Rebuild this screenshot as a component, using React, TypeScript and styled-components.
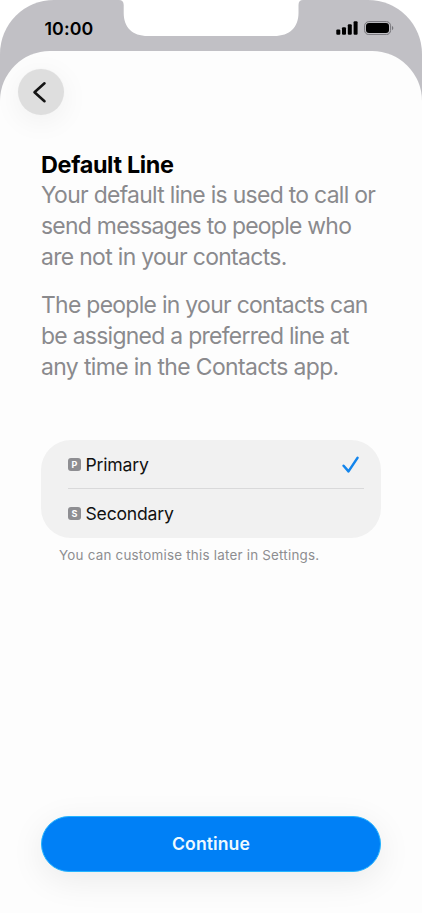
import React from "react";
import styled, { createGlobalStyle } from "styled-components";

const GlobalStyle = createGlobalStyle`
  *, *::before, *::after { box-sizing: border-box; }
  body { margin: 0; background: #fff; font-family: Inter, "Liberation Sans", sans-serif; }
  h1, p { margin: 0; }
`;

const Phone = styled.div`
  width: 422px;
  height: 913px;
  display: flex;
  flex-direction: column;
  overflow: hidden;
  border-radius: 54px 54px 0 0;
  background: linear-gradient(#c1c0c5 0 140px, #fdfdfd 140px);
`;

const StatusBar = styled.header`
  flex: none;
  height: 51px;
  display: grid;
  grid-template-columns: 119px 184px 119px;
`;

const Clock = styled.time`
  padding: 18px 0 0 44.5px;
  font-size: 17.8px;
  line-height: 21px;
  font-weight: 600;
  letter-spacing: 0.1px;
  color: #000;
`;

const Indicators = styled.div`
  display: flex;
  align-items: flex-start;
  gap: 6px;
  padding: 21px 0 0 33px;
`;

const Sheet = styled.main`
  flex: 1;
  display: flex;
  flex-direction: column;
  padding: 18px 41px 41.4px;
  border-radius: 50px 50px 0 0;
  background: #fdfdfd;
`;

const BackButton = styled.button`
  flex: none;
  width: 46px;
  height: 46px;
  margin-left: -23px;
  padding: 0;
  display: grid;
  place-items: center;
  border: 0;
  border-radius: 50%;
  background: #dedede;
  box-shadow: 0 0 0 0.7px #f6f6f6, 0 6px 30px rgba(0, 0, 0, 0.06);
`;

const Title = styled.h1`
  margin-top: 34px;
  font-size: 23.4px;
  line-height: 31px;
  font-weight: 700;
  letter-spacing: -0.34px;
  color: #000;
`;

const Copy = styled.p`
  margin-bottom: 18px;
  font-size: 22.9px;
  line-height: 30.8px;
  color: #8a8a8d;
`;

const Line = styled.span<{ $tracking: number }>`
  display: block;
  white-space: nowrap;
  letter-spacing: ${({ $tracking }) => $tracking}px;
`;

const Options = styled.div`
  flex: none;
  height: 98px;
  margin-top: 39px;
  padding: 0 17px 0 27px;
  border-radius: 30px;
  background: #f1f1f1;
`;

const Option = styled.div<{ $divided?: boolean }>`
  height: 49px;
  display: flex;
  align-items: center;
  padding-top: ${({ $divided }) => ($divided ? "2px" : "1px")};
  border-bottom: ${({ $divided }) => ($divided ? "1px solid #d9d9da" : "0")};
`;

const Badge = styled.span`
  width: 13px;
  height: 13px;
  margin-right: 4.5px;
  display: grid;
  place-items: center;
  border-radius: 3px;
  background: #8e8e92;
  color: #fff;
  font-size: 9px;
  line-height: 13px;
  font-weight: 700;
`;

const OptionName = styled.span<{ $tracking: number }>`
  flex: 1;
  font-size: 17.6px;
  line-height: 24px;
  letter-spacing: ${({ $tracking }) => $tracking}px;
  color: #111;
`;

const Footnote = styled.p`
  margin: 9px 0 auto 18px;
  font-size: 13.4px;
  line-height: 17px;
  letter-spacing: 0.22px;
  white-space: nowrap;
  color: #8d8d90;
`;

const Continue = styled.button`
  flex: none;
  height: 56px;
  padding: 0;
  border: 1px solid #24b4ff;
  border-radius: 28px;
  background: #0080f6;
  box-shadow: 0 8px 34px rgba(0, 0, 0, 0.08);
  color: #eefaff;
  font-family: inherit;
  font-size: 17.6px;
  font-weight: 600;
  letter-spacing: 0.08px;
`;

const Notch = () => (
  <svg width="184" height="37" viewBox="0 0 184 37" aria-hidden="true">
    <path d="M0 0H184C181 0 179.500 1.500 179.500 5V13C179.500 27 171 36 155 36H29C13 36 4.700 27 4.700 13V5C4.700 1.500 3 0 0 0Z" fill="#fff" />
  </svg>
);

const Signal = () => (
  <svg width="22" height="14" viewBox="0 0 22 14" aria-hidden="true">
    <rect x="0.300" y="8.500" width="4" height="5.300" rx="1.100" />
    <rect x="6" y="6.200" width="4" height="7.600" rx="1.100" />
    <rect x="11.800" y="3.200" width="4" height="10.600" rx="1.100" />
    <rect x="17.600" y="0.200" width="4" height="13.600" rx="1.100" />
  </svg>
);

const Battery = () => (
  <svg width="30" height="14" viewBox="0 0 30 14" aria-hidden="true">
    <rect x="0.600" y="0.600" width="26" height="13" rx="4.200" fill="none" stroke="#77767b" />
    <rect x="2" y="2" width="23" height="10" rx="3" />
    <path d="M28 5V9.200C29.800 8.500 29.800 5.700 28 5Z" fill="#77767b" />
  </svg>
);

const Chevron = () => (
  <svg width="46" height="46" viewBox="0 0 46 46" fill="none" aria-hidden="true">
    <path d="M26.500 14.300L16.500 23.200L26.500 32.200" stroke="#151515" strokeWidth="2.600" strokeLinecap="round" strokeLinejoin="round" />
  </svg>
);

const Check = () => (
  <svg width="22" height="20" viewBox="0 0 22 20" fill="none" aria-hidden="true">
    <path d="M1.600 10.800L6.500 16.400L15.500 2.900" stroke="#1385ec" strokeWidth="2.500" strokeLinecap="round" strokeLinejoin="round" />
  </svg>
);

export default function App() {
  return (
    <>
      <GlobalStyle />
      <Phone>
        <StatusBar>
          <Clock>10:00</Clock>
          <Notch />
          <Indicators>
            <Signal />
            <Battery />
          </Indicators>
        </StatusBar>
        <Sheet>
          <BackButton aria-label="Back">
            <Chevron />
          </BackButton>
          <Title>Default Line</Title>
          <Copy>
            <Line $tracking={-0.69}>Your default line is used to call or</Line>
            <Line $tracking={-0.72}>send messages to people who</Line>
            <Line $tracking={-0.66}>are not in your contacts.</Line>
          </Copy>
          <Copy>
            <Line $tracking={-0.69}>The people in your contacts can</Line>
            <Line $tracking={-0.7}>be assigned a preferred line at</Line>
            <Line $tracking={-0.61}>any time in the Contacts app.</Line>
          </Copy>
          <Options>
            <Option $divided>
              <Badge>P</Badge>
              <OptionName $tracking={-0.2}>Primary</OptionName>
              <Check />
            </Option>
            <Option>
              <Badge>S</Badge>
              <OptionName $tracking={-0.2}>Secondary</OptionName>
            </Option>
          </Options>
          <Footnote>You can customise this later in Settings.</Footnote>
          <Continue>Continue</Continue>
        </Sheet>
      </Phone>
    </>
  );
}
